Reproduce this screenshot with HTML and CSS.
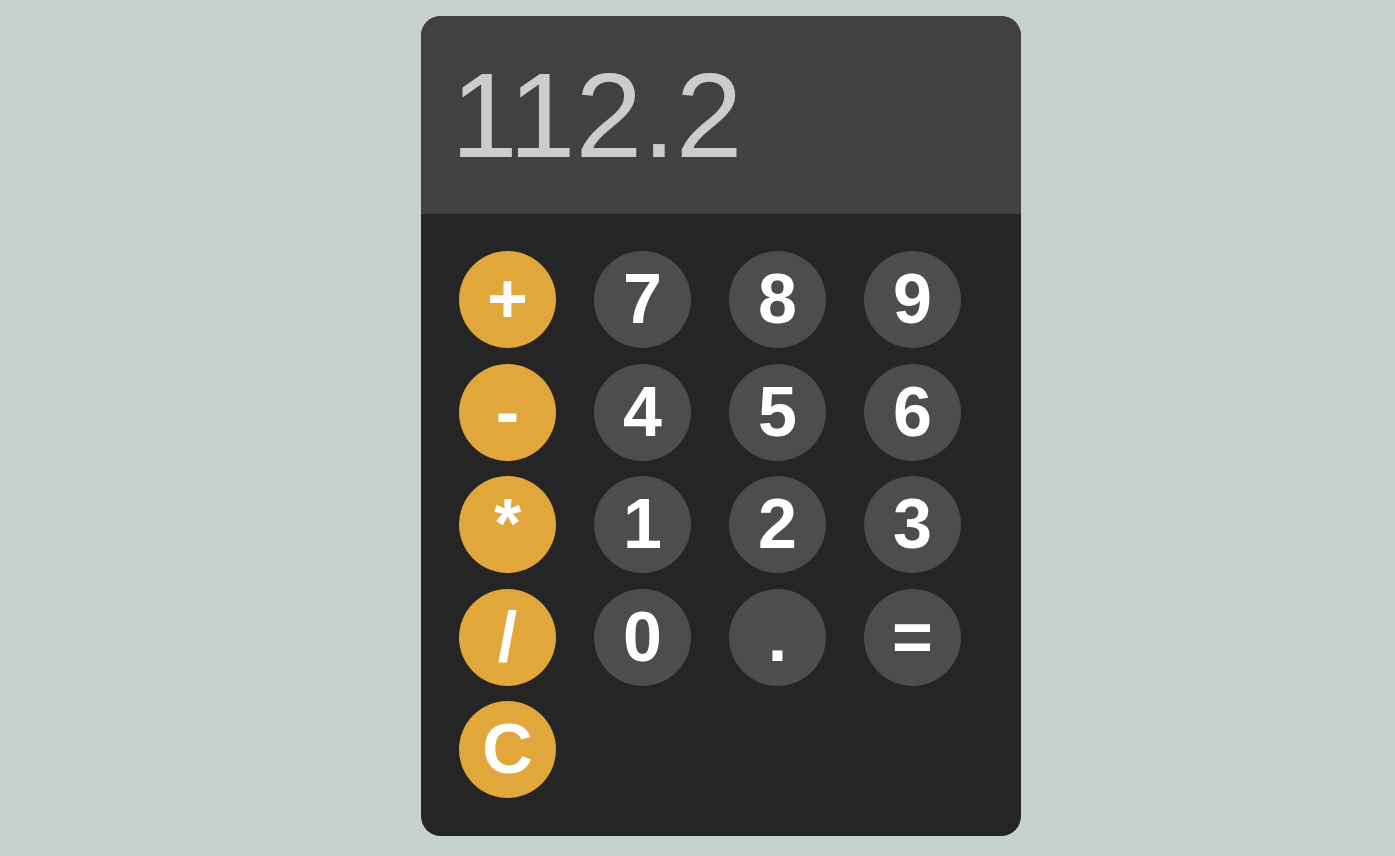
FILE: index.html
```html
<!DOCTYPE html>
<html lang="en">
<head>
<meta charset="utf-8">
<title>Calculator</title>
<link rel="stylesheet" href="styles.css">
</head>
<body>
<div class="calculator">
  <div class="display">112.2</div>
  <div class="keypad">
    <button class="key op">+</button>
    <button class="key">7</button>
    <button class="key">8</button>
    <button class="key">9</button>
    <button class="key op">-</button>
    <button class="key">4</button>
    <button class="key">5</button>
    <button class="key">6</button>
    <button class="key op">*</button>
    <button class="key">1</button>
    <button class="key">2</button>
    <button class="key">3</button>
    <button class="key op">/</button>
    <button class="key">0</button>
    <button class="key">.</button>
    <button class="key">=</button>
    <button class="key op">C</button>
  </div>
</div>
</body>
</html>
```

FILE: styles.css
```css
html, body {
  margin: 0;
  padding: 0;
}

body {
  background: #c5d2cd;
  font-family: "Liberation Sans", Arial, sans-serif;
  padding-top: 16px;
}

.calculator {
  width: 600px;
  height: 820px;
  margin: 0 0 0 calc(50% - 276.5px);
  border-radius: 20px;
  overflow: hidden;
  background: #252525;
  display: flex;
  flex-direction: column;
}

.display {
  height: 198px;
  background: #414141;
  color: #cccccc;
  font-size: 120px;
  line-height: 198px;
  padding-left: 30px;
  box-sizing: border-box;
  flex: none;
}

.keypad {
  display: grid;
  grid-template-columns: repeat(4, 97px);
  grid-auto-rows: 97px;
  column-gap: 38px;
  row-gap: 15.5px;
  padding: 37px 0 0 38px;
}

.key {
  width: 97px;
  height: 97px;
  border: none;
  border-radius: 50%;
  background: #4d4d4d;
  color: #ffffff;
  font-family: "Liberation Sans", Arial, sans-serif;
  font-weight: bold;
  font-size: 70px;
  line-height: 97px;
  padding: 0;
  margin: 0;
}

.key.op {
  background: #e2a73a;
}
```
